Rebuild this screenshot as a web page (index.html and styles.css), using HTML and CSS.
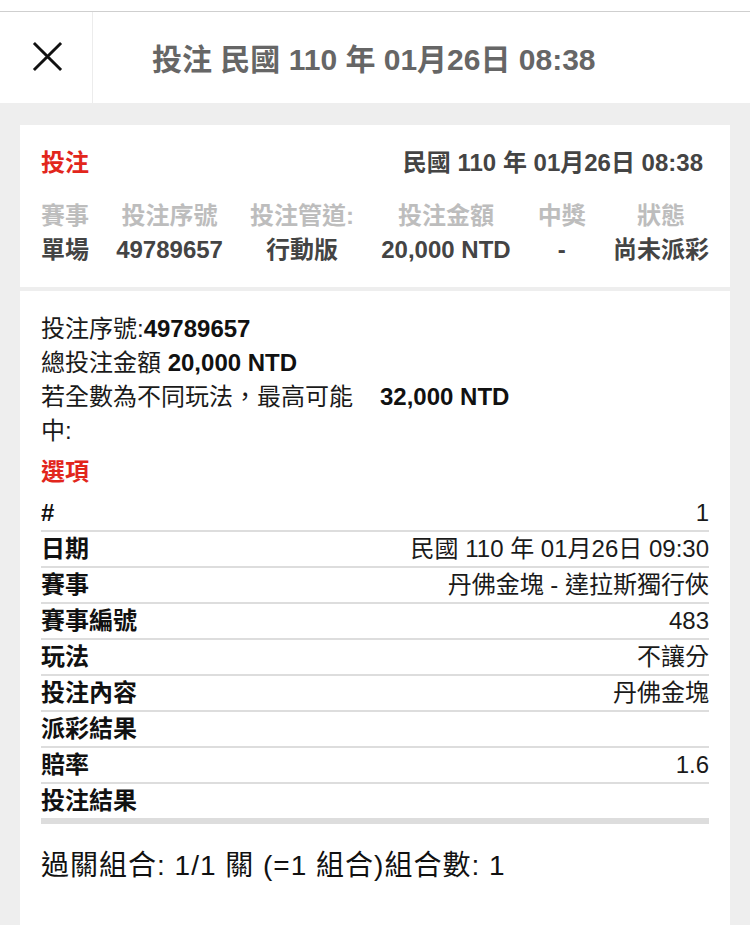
FILE: index.html
```html
<!DOCTYPE html>
<html lang="zh-Hant">
<head>
<meta charset="utf-8">
<title>投注</title>
<link rel="stylesheet" href="styles.css">
</head>
<body>
<div class="topbar"></div>
<header class="header">
  <div class="close">
    <svg width="32" height="32" viewBox="0 0 32 32"><path d="M2 2 L30 30 M30 2 L2 30" stroke="#111" stroke-width="3" fill="none" stroke-linecap="butt"/></svg>
  </div>
  <div class="title">投注 民國 110 年 01月26日 08:38</div>
</header>
<main class="content">
  <section class="card summary">
    <div class="summary-head">
      <span class="red">投注</span>
      <span class="date">民國 110 年 01月26日 08:38</span>
    </div>
    <div class="cols">
      <div class="col"><div class="lbl">賽事</div><div class="val">單場</div></div>
      <div class="col"><div class="lbl">投注序號</div><div class="val">49789657</div></div>
      <div class="col"><div class="lbl">投注管道:</div><div class="val">行動版</div></div>
      <div class="col"><div class="lbl">投注金額</div><div class="val">20,000 NTD</div></div>
      <div class="col"><div class="lbl">中獎</div><div class="val">-</div></div>
      <div class="col"><div class="lbl">狀態</div><div class="val">尚未派彩</div></div>
    </div>
  </section>
  <section class="card detail">
    <div class="line">投注序號:<b>49789657</b></div>
    <div class="line">總投注金額 <b>20,000 NTD</b></div>
    <div class="maxwin">
      <div class="mw-label">若全數為不同玩法，最高可能中:</div>
      <div class="mw-val">32,000 NTD</div>
    </div>
    <div class="sec-title">選項</div>
    <table class="opts">
      <tr><th>#</th><td>1</td></tr>
      <tr><th>日期</th><td>民國 110 年 01月26日 09:30</td></tr>
      <tr><th>賽事</th><td>丹佛金塊 - 達拉斯獨行俠</td></tr>
      <tr><th>賽事編號</th><td>483</td></tr>
      <tr><th>玩法</th><td>不讓分</td></tr>
      <tr><th>投注內容</th><td>丹佛金塊</td></tr>
      <tr><th>派彩結果</th><td></td></tr>
      <tr><th>賠率</th><td>1.6</td></tr>
      <tr class="last"><th>投注結果</th><td></td></tr>
    </table>
    <div class="combo">過關組合: 1/1 關 (=1 組合)組合數: 1</div>
  </section>
</main>
</body>
</html>
```

FILE: styles.css
```css
* { box-sizing: border-box; }
html, body {
  margin: 0;
  padding: 0;
  background: #fff;
  font-family: "Liberation Sans", "Noto Sans CJK TC", sans-serif;
}
.topbar {
  height: 12px;
  background: #fff;
  border-bottom: 1px solid #cfcfcf;
}
.header {
  display: flex;
  align-items: stretch;
  height: 91px;
  background: #fff;
}
.close {
  width: 93px;
  border-right: 1px solid #ececec;
  display: flex;
  align-items: center;
  justify-content: center;
  padding-left: 2px;
  padding-bottom: 2px;
}
.close svg { display: block; width: 31px; height: 31px; }
.title {
  display: flex;
  align-items: center;
  padding-left: 59px;
  font-size: 30px;
  font-weight: bold;
  color: #666;
  padding-bottom: 2px;
}
.content {
  background: #eee;
  padding: 22px 20px 0;
  min-height: 821px;
}
.card {
  background: #fff;
  padding: 0 21px;
}
.summary {
  padding-top: 21px;
  padding-bottom: 20px;
  margin-bottom: 4px;
}
.summary-head {
  display: flex;
  justify-content: space-between;
  line-height: 34px;
  font-size: 24px;
  font-weight: bold;
}
.red { color: #e2261c; }
.date { color: #444; margin-right: 6px; }
.cols {
  display: flex;
  justify-content: space-between;
  margin-top: 19px;
  font-size: 24px;
  font-weight: bold;
  line-height: 34px;
}
.col { text-align: center; }
.lbl { color: #bdbdbd; }
.val { color: #444; }
.detail {
  padding-top: 21px;
  padding-bottom: 60px;
  font-size: 24px;
  line-height: 34px;
  color: #1a1a1a;
}
.line b { font-weight: bold; color: #111; }
.maxwin {
  display: flex;
}
.mw-label { width: 334px; }
.mw-val {
  padding-left: 5px;
  font-weight: bold;
  color: #111;
}
.sec-title {
  margin-top: 7px;
  margin-bottom: 7px;
  color: #e2261c;
  font-weight: bold;
}
.opts {
  width: 100%;
  border-collapse: separate;
  border-spacing: 0;
  font-size: 24px;
}
.opts th, .opts td {
  padding: 0;
  height: 36px;
  line-height: 34px;
  border-bottom: 2px solid #ddd;
  vertical-align: middle;
}
.opts th {
  text-align: left;
  font-weight: bold;
  color: #111;
}
.opts td {
  text-align: right;
  font-weight: normal;
  color: #1a1a1a;
}
.opts tr.last th, .opts tr.last td {
  height: 40px;
  border-bottom: 6px solid #ddd;
}
.combo {
  margin-top: 22px;
  font-size: 28px;
  letter-spacing: 1px;
  line-height: 40px;
  color: #111;
}
```
